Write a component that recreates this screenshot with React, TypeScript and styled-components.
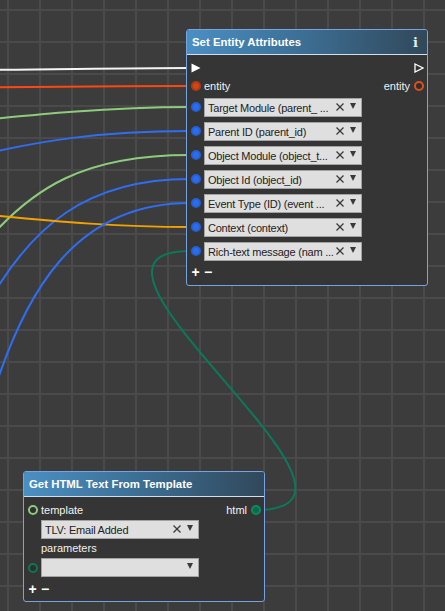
import React from "react";
import styled, { createGlobalStyle } from "styled-components";

const GlobalStyle = createGlobalStyle`
  html, body { margin: 0; padding: 0; background: #3c3c3c; }
  body { font-family: "Liberation Sans", Arial, sans-serif; }
`;

const Canvas = styled.div`
  position: relative;
  width: 445px;
  height: 611px;
  overflow: hidden;
  background-color: #3c3c3c;
  background-image:
    linear-gradient(to right, #4a4a4a 2px, transparent 2px),
    linear-gradient(to bottom, #4a4a4a 2px, transparent 2px);
  background-size: 32px 32px;
  background-position: 7px 9px;
`;

const WireLayer = styled.svg`
  position: absolute;
  left: 0;
  top: 0;
  width: 445px;
  height: 611px;
  fill: none;
  stroke-width: 2;
`;

const NodeBox = styled.div<{ $x: number; $y: number }>`
  position: absolute;
  left: ${(p) => p.$x}px;
  top: ${(p) => p.$y}px;
  width: 242px;
  box-sizing: border-box;
  border: 1px solid #76a4e2;
  border-radius: 3px;
  background: #353535;
  display: flex;
  flex-direction: column;
  overflow: hidden;
`;

const Header = styled.div`
  height: 24px;
  display: flex;
  align-items: center;
  justify-content: space-between;
  padding: 0 9px 0 5px;
  background: linear-gradient(to right, #4a8fc3 0%, #3c6d92 50%, #31485a 100%);
  border-bottom: 1px solid #d2e0ee;
`;

const Title = styled.span`
  color: #ffffff;
  font-weight: bold;
  font-size: 11.4px;
  white-space: nowrap;
`;

const InfoIcon = styled.span`
  color: #e6edf5;
  font-family: "DejaVu Serif", "Liberation Serif", serif;
  font-weight: bold;
  font-size: 13px;
  line-height: 1;
`;

const Body = styled.div<{ $pt: number; $pb: number }>`
  display: flex;
  flex-direction: column;
  padding: ${(p) => p.$pt}px 0 ${(p) => p.$pb}px;
`;

const Row = styled.div<{ $h: number }>`
  height: ${(p) => p.$h}px;
  display: flex;
  align-items: center;
`;

const PinSlot = styled.div`
  width: 17px;
  flex: 0 0 17px;
  display: flex;
  align-items: center;
  justify-content: center;
`;

const Pin = styled.span<{ $fill: string; $ring: string }>`
  display: block;
  width: 10px;
  height: 10px;
  box-sizing: border-box;
  border-radius: 50%;
  background: ${(p) => p.$fill};
  border: 2px solid ${(p) => p.$ring};
`;

const Label = styled.span`
  color: #f2f2f2;
  font-size: 11px;
  white-space: nowrap;
`;

const Spacer = styled.div`
  flex: 1;
`;

const Field = styled.div`
  width: 158px;
  height: 19px;
  box-sizing: border-box;
  background: #dfdfdf;
  border: 1px solid #a3a3a3;
  display: flex;
  align-items: center;
  padding: 0 5px 0 3px;
`;

const FieldText = styled.span`
  flex: 1;
  min-width: 0;
  font-size: 11px;
  letter-spacing: -0.22px;
  color: #222222;
  white-space: nowrap;
  padding-top: 1px;
`;

const ClearMark = styled.svg`
  flex: 0 0 8px;
  width: 8px;
  height: 8px;
  margin-right: 6px;
  stroke: #3a3a3a;
  stroke-width: 1.3;
`;

const DropMark = styled.span`
  flex: 0 0 auto;
  align-self: flex-start;
  margin-top: 4px;
  width: 0;
  height: 0;
  border-left: 3.5px solid transparent;
  border-right: 3.5px solid transparent;
  border-top: 6px solid #3a3a3a;
`;

const Exec = styled.svg`
  width: 10px;
  height: 10px;
`;

const PlusMinus = styled.span<{ $w: number }>`
  width: ${(p) => p.$w}px;
  text-align: center;
  color: #ffffff;
  font-size: 14px;
  font-weight: bold;
  line-height: 1;
`;

const FieldBox: React.FC<{ text: string; clear?: boolean }> = ({ text, clear = true }) => (
  <Field>
    <FieldText>{text}</FieldText>
    {clear && (
      <ClearMark viewBox="0 0 8 8">
        <line x1="0.5" y1="0.5" x2="7.5" y2="7.5" />
        <line x1="7.5" y1="0.5" x2="0.5" y2="7.5" />
      </ClearMark>
    )}
    <DropMark />
  </Field>
);

const BluePin = () => <Pin $fill="#2c6ded" $ring="#2460d6" />;

const AddRemove: React.FC<{ h: number }> = ({ h }) => (
  <Row $h={h}>
    <PlusMinus $w={17}>+</PlusMinus>
    <PlusMinus $w={8}>−</PlusMinus>
  </Row>
);

const fields = [
  "Target Module (parent_ ...",
  "Parent ID (parent_id)",
  "Object Module (object_t...",
  "Object Id (object_id)",
  "Event Type (ID) (event  ...",
  "Context (context)",
  "Rich-text message (nam ...",
];

const wires = [
  { d: "M -20 70 C 60 69.5, 120 68, 190 68", c: "#f4f4f4" },
  { d: "M -20 87.5 C 60 87, 120 86, 190 86", c: "#ff4712" },
  { d: "M -60 124 C 40 114, 110 107, 190 107", c: "#8ecb7c" },
  { d: "M -60 165 C 40 138, 110 131, 190 131", c: "#2f6ef2" },
  { d: "M -30 262 C 30 182, 90 155, 190 155", c: "#8ecb7c" },
  { d: "M -20 318 C 30 222, 90 179, 190 179", c: "#2f6ef2" },
  { d: "M -10 215 C 60 222, 120 227, 190 227", c: "#f2a200" },
  { d: "M -20 440 C 20 282, 80 203, 190 203", c: "#2f6ef2" },
  { d: "M 256 510 C 414 510, 35 251, 190 251", c: "#0b7a5a" },
];

export default function App() {
  return (
    <>
      <GlobalStyle />
      <Canvas>
        <WireLayer viewBox="0 0 445 611">
          {wires.map((w, i) => (
            <path key={i} d={w.d} stroke={w.c} />
          ))}
        </WireLayer>

        <NodeBox $x={186} $y={29}>
          <Header>
            <Title>Set Entity Attributes</Title>
            <InfoIcon>i</InfoIcon>
          </Header>
          <Body $pt={4} $pb={4}>
            <Row $h={18}>
              <PinSlot>
                <Exec viewBox="0 0 10 10">
                  <polygon points="0.5,0.5 9.5,5 0.5,9.5" fill="#ffffff" />
                </Exec>
              </PinSlot>
              <Spacer />
              <PinSlot>
                <Exec viewBox="0 0 10 10">
                  <polygon points="1,1 9,5 1,9" fill="none" stroke="#ffffff" strokeWidth="1.3" />
                </Exec>
              </PinSlot>
            </Row>
            <Row $h={18}>
              <PinSlot>
                <Pin $fill="#cf4618" $ring="#b43a12" />
              </PinSlot>
              <Label>entity</Label>
              <Spacer />
              <Label>entity</Label>
              <PinSlot>
                <Pin $fill="#2f2f2f" $ring="#e0501c" />
              </PinSlot>
            </Row>
            {fields.map((f) => (
              <Row $h={24} key={f}>
                <PinSlot>
                  <BluePin />
                </PinSlot>
                <FieldBox text={f} />
              </Row>
            ))}
            <AddRemove h={18} />
          </Body>
        </NodeBox>

        <NodeBox $x={23} $y={471}>
          <Header>
            <Title>Get HTML Text From Template</Title>
          </Header>
          <Body $pt={4} $pb={1}>
            <Row $h={18}>
              <PinSlot>
                <Pin $fill="#2f2f2f" $ring="#8cc97c" />
              </PinSlot>
              <Label>template</Label>
              <Spacer />
              <Label>html</Label>
              <PinSlot>
                <Pin $fill="#0a6a4b" $ring="#0d8a62" />
              </PinSlot>
            </Row>
            <Row $h={20}>
              <PinSlot />
              <FieldBox text="TLV: Email Added" />
            </Row>
            <Row $h={18}>
              <PinSlot />
              <Label>parameters</Label>
            </Row>
            <Row $h={21}>
              <PinSlot>
                <Pin $fill="#2f2f2f" $ring="#0c7757" />
              </PinSlot>
              <FieldBox text="" clear={false} />
            </Row>
            <AddRemove h={22} />
          </Body>
        </NodeBox>
      </Canvas>
    </>
  );
}
